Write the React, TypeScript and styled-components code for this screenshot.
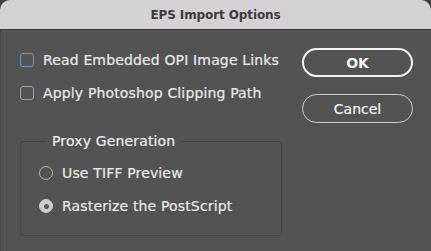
import React from "react";
import styled, { createGlobalStyle } from "styled-components";

const Global = createGlobalStyle`
  html, body { margin: 0; padding: 0; background: #3f3f3f; }
  body { font-family: "DejaVu Sans", "Liberation Sans", sans-serif; }
`;

const Window = styled.div`
  width: 431px;
  height: 251px;
  background: #535353;
  border-radius: 10px 10px 0 0;
  overflow: hidden;
  display: flex;
  flex-direction: column;
  box-shadow: inset 1px 0 0 #474747;
`;

const TitleBar = styled.div`
  height: 29px;
  flex: none;
  background: #d4d0d3;
  border-bottom: 1px solid #3a3a3a;
  display: flex;
  align-items: center;
  justify-content: center;
  font-size: 12px;
  letter-spacing: -0.1px;
  font-weight: bold;
  color: #3d3a3d;
`;

const Body = styled.div`
  display: flex;
  padding: 0 18px 0 20px;
`;

const LeftCol = styled.div`
  width: 262px;
  display: flex;
  flex-direction: column;
  padding-top: 23px;
`;

const RightCol = styled.div`
  margin-left: 20px;
  display: flex;
  flex-direction: column;
  gap: 17px;
  padding-top: 18px;
`;

const Row = styled.div`
  display: flex;
  align-items: center;
  height: 14px;
  gap: 9px;
  color: #e8e8e8;
  font-size: 14px;
  letter-spacing: 0.15px;
  -webkit-text-stroke: 0.2px #e8e8e8;
  margin-bottom: 19px;
`;

const Box = styled.span<{ $focus?: boolean }>`
  width: 14px;
  height: 14px;
  box-sizing: border-box;
  flex: none;
  border-radius: 3px;
  border: 1.5px solid ${(p) => (p.$focus ? "#6a9ad6" : "#a2a2a2")};
`;

const Group = styled.fieldset`
  margin: 14px 0 0 0;
  padding: 17px 0 14px 18px;
  border: 1px solid #444444;
  border-radius: 3px;
  height: 103px;
  box-sizing: border-box;
`;

const Legend = styled.legend`
  color: #ececec;
  font-size: 14px;
  letter-spacing: 0.15px;
  -webkit-text-stroke: 0.2px #ececec;
  padding: 0 6px;
  margin-left: 7px;
`;

const Radio = styled.span<{ $on?: boolean }>`
  width: 14px;
  height: 14px;
  box-sizing: border-box;
  flex: none;
  border-radius: 50%;
  border: 1.5px solid ${(p) => (p.$on ? "#cdcdcd" : "#b4b4b4")};
  background: ${(p) => (p.$on ? "#cdcdcd" : "transparent")};
  display: flex;
  align-items: center;
  justify-content: center;
  &::after {
    content: "";
    width: 5px;
    height: 5px;
    border-radius: 50%;
    background: ${(p) => (p.$on ? "#5a5a5a" : "transparent")};
  }
`;

const Button = styled.button<{ $default?: boolean }>`
  width: 111px;
  height: 29px;
  box-sizing: border-box;
  border-radius: 15px;
  background: transparent;
  border: ${(p) => (p.$default ? "2px solid #f2f2f2" : "1px solid #cfcfcf")};
  color: #f4f4f4;
  font-family: inherit;
  font-size: 14px;
  font-weight: ${(p) => (p.$default ? "bold" : "normal")};
  -webkit-text-stroke: ${(p) => (p.$default ? "0" : "0.2px #f4f4f4")};
  padding: 0;
`;

export default function App() {
  return (
    <>
      <Global />
      <Window>
        <TitleBar>EPS Import Options</TitleBar>
        <Body>
          <LeftCol>
            <Row>
              <Box $focus />
              Read Embedded OPI Image Links
            </Row>
            <Row>
              <Box />
              Apply Photoshop Clipping Path
            </Row>
            <Group>
              <Legend>Proxy Generation</Legend>
              <Row>
                <Radio />
                Use TIFF Preview
              </Row>
              <Row>
                <Radio $on />
                Rasterize the PostScript
              </Row>
            </Group>
          </LeftCol>
          <RightCol>
            <Button $default>OK</Button>
            <Button>Cancel</Button>
          </RightCol>
        </Body>
      </Window>
    </>
  );
}
